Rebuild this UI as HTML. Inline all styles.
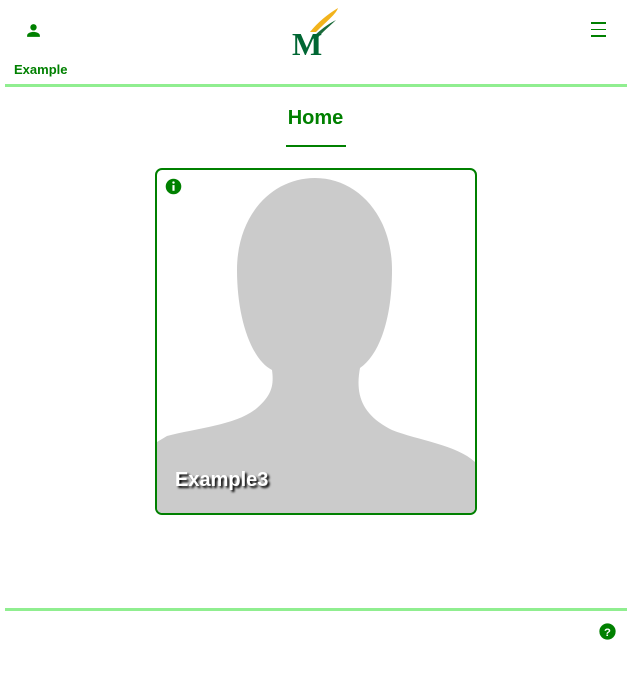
<!DOCTYPE html>
<html><head><style>
body{margin:0;width:631px;height:680px;background:#fff;font-family:"Liberation Sans",Arial,sans-serif;position:relative;overflow:hidden}
.abs{position:absolute}
.line{position:absolute;left:5px;width:622px;height:3px;background:#90ee90}
</style></head><body>
<svg class="abs" style="left:25px;top:22px" width="17" height="17" viewBox="0 0 24 24"><path fill="#008000" d="M12 12a4.5 4.5 0 1 0 0-9 4.5 4.5 0 0 0 0 9zm0 2c-3.3 0-9 1.7-9 5v2h18v-2c0-3.3-5.7-5-9-5z"/></svg>
<div class="abs" style="left:14px;top:62px;font-size:13px;font-weight:bold;color:#008000">Example</div>
<svg class="abs" style="left:290px;top:6px" width="52" height="52" viewBox="0 0 52 52">
<path d="M20 26 C28 16 38 8 48 2 C46 8 38 14 26 26Z" fill="#f2b31c"/>
<path d="M22 32 C30 24 38 18 46 14 C40 20 32 26 26 34Z" fill="#1b6a3a"/>
<text x="2" y="49" font-family="Liberation Serif,serif" font-weight="bold" font-size="32" fill="#006633">M</text>
</svg>
<div class="abs" style="left:591px;top:22px;width:15px">
<div style="height:1.5px;background:#008000;margin-bottom:5px"></div>
<div style="height:1.5px;background:#008000;margin-bottom:5px"></div>
<div style="height:1.5px;background:#008000"></div></div>
<div class="line" style="top:84px"></div>
<div class="abs" style="left:0;width:631px;top:107px;text-align:center;font-size:20px;font-weight:bold;color:#008000">Home</div>
<div class="abs" style="left:286px;top:145px;width:60px;height:2px;background:#008000"></div>
<div class="abs" style="left:155px;top:168px;width:318px;height:343px;border:2px solid #008000;border-radius:7px;overflow:hidden;background:#fff">
<svg width="318" height="343" viewBox="0 0 318 343" style="position:absolute;left:0;top:0">
<path fill="#cbcbcb" d="M158 8 C115 8 80 45 80 100 C80 150 95 190 115 200 C117 215 115 225 100 238 C80 255 40 258 10 266 L0 272 L0 343 L318 343 L318 292 C300 275 260 270 235 260 C205 245 198 225 203 198 C222 185 235 150 235 100 C235 45 200 8 158 8Z"/>
</svg>
<svg class="abs" style="left:8px;top:8px" width="17" height="17" viewBox="0 0 24 24"><circle cx="12" cy="12" r="11" fill="#008000"/><rect x="10.5" y="10" width="3" height="8" fill="#fff"/><circle cx="12" cy="6.5" r="1.7" fill="#fff"/></svg>
<div class="abs" style="left:18px;top:299px;font-size:20px;font-weight:bold;color:#fff;text-shadow:2px 2px 2px #000">Example3</div>
</div>
<div class="line" style="top:608px"></div>
<svg class="abs" style="left:599px;top:623px" width="17" height="17" viewBox="0 0 24 24"><circle cx="12" cy="12" r="11.5" fill="#008000"/><text x="12" y="18" text-anchor="middle" font-family="Liberation Sans" font-weight="bold" font-size="16" fill="#fff">?</text></svg>
</body></html>
